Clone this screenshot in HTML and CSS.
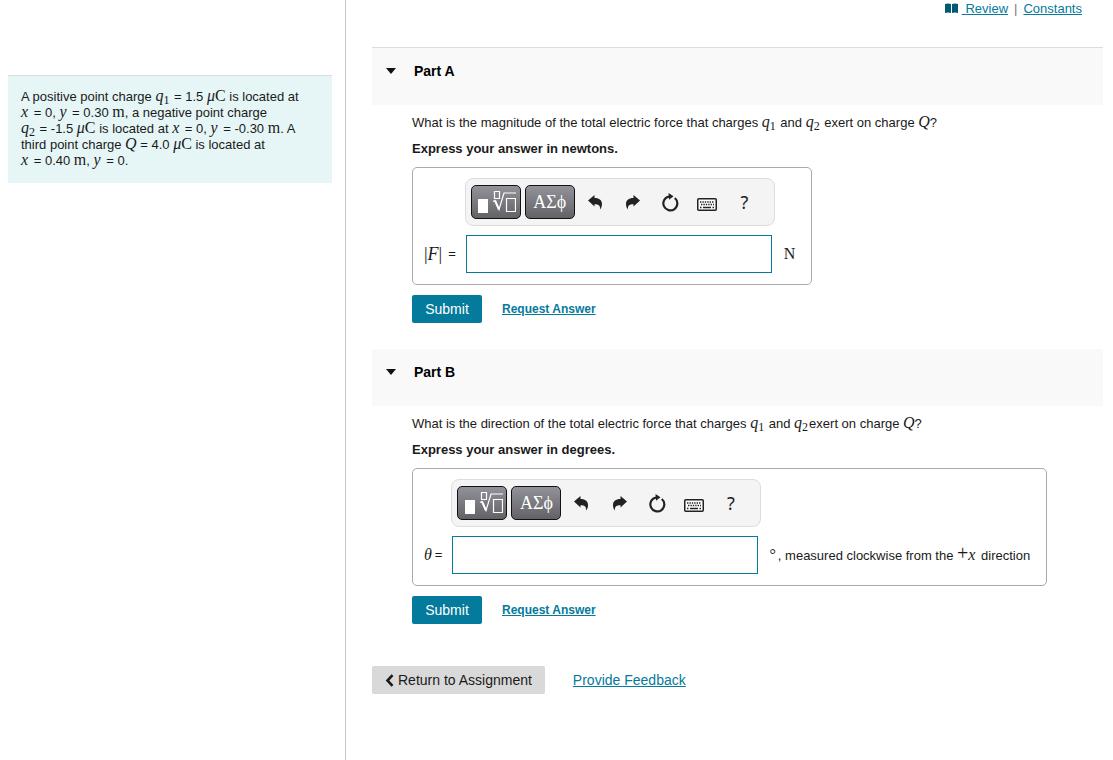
FILE: index.html
```html
<!DOCTYPE html>
<html lang="en">
<head>
<meta charset="utf-8">
<title>Electric force problem</title>
<link rel="stylesheet" href="styles.css">
</head>
<body>
<svg class="symbols" aria-hidden="true">
  <symbol id="i-template" viewBox="0 0 38 24">
    <path d="M0 9h10v14H0z" fill="#fff"/>
    <path d="M16.500 1.500h5v7h-5zM28.500 8.500h9v13h-9zM15 11.500l2-1 4 9 5-16.500h12" fill="none" stroke="#fff" stroke-width="1.200"/>
    <path d="M17 10.500l4 9" stroke="#fff" stroke-width="2"/>
  </symbol>
  <symbol id="i-undo" viewBox="0 0 14 15">
    <path d="M0 5.500L6.500 0v3C11.500 3 14 5.500 14 9c0 2.200-.6 4-2 5.500.4-3.800-1-5.300-5.500-5.300V11.500z"/>
  </symbol>
  <symbol id="i-reset" viewBox="0 0 18 19">
    <path d="M13.800 5A7 7 0 1 1 8.200 3.500" fill="none" stroke="currentColor" stroke-width="2.200"/>
    <path d="M7.500 0l5 3.300-4.500 3.500z"/>
  </symbol>
  <symbol id="i-keyboard" viewBox="0 0 20 13">
    <rect x=".75" y=".75" width="18.500" height="11.500" rx="1" fill="#fff" stroke="currentColor" stroke-width="1.500"/>
    <path d="M3 4h14M4 6.500h13" fill="none" stroke="currentColor" stroke-width="1.600" stroke-dasharray="1.400 1"/>
    <path d="M3 9.500h1.500M6 9.500h8M15.500 9.500H17" stroke="currentColor" stroke-width="1.500"/>
  </symbol>
</svg>
<div class="page">
  <aside class="sidebar">
    <p class="problem">A positive point charge <i class="m">q</i><span class="sub">1</span> = 1.5 <span class="m"><i>μ</i>C</span> is located at<br>
    <i class="m var">x</i> = 0, <i class="m var">y</i> = 0.30 <span class="m">m</span>, a negative point charge<br>
    <i class="m">q</i><span class="sub">2</span> = -1.5 <span class="m"><i>μ</i>C</span> is located at <i class="m var">x</i> = 0, <i class="m var">y</i> = -0.30 <span class="m">m</span>. A<br>
    third point charge <i class="m">Q</i> = 4.0 <span class="m"><i>μ</i>C</span> is located at<br>
    <i class="m var">x</i> = 0.40 <span class="m">m</span>, <i class="m var">y</i> = 0.</p>
  </aside>
  <main class="main">
    <nav class="links">
      <svg class="book" viewBox="0 0 13 11" aria-hidden="true"><path d="M0 1q3-1 6 0v9q-3-1-6 0zM7 1q3-1 6 0v9q-3-1-6 0z"/></svg>
      <a href="#review">&nbsp;Review</a><span class="bar">|</span><a href="#constants">Constants</a>
    </nav>

    <section class="part">
      <h2 class="part-head first"><button class="toggle" type="button"><span class="caret"></span>Part A</button></h2>
      <div class="part-body">
        <p class="question">What is the magnitude of the total electric force that charges <i class="m">q</i><span class="sub">1</span> and <i class="m">q</i><span class="sub">2</span> exert on charge <i class="m">Q</i>?</p>
        <p class="hint">Express your answer in newtons.</p>
        <div class="answer">
          <div class="tools">
            <button class="tile" type="button" aria-label="Templates"><svg class="template"><use href="#i-template"/></svg></button>
            <button class="tile greek" type="button">ΑΣϕ</button>
            <button class="tool" type="button" aria-label="Undo"><svg class="arrow"><use href="#i-undo"/></svg></button>
            <button class="tool" type="button" aria-label="Redo"><svg class="arrow flip"><use href="#i-undo"/></svg></button>
            <button class="tool" type="button" aria-label="Reset"><svg class="reset"><use href="#i-reset"/></svg></button>
            <button class="tool" type="button" aria-label="Keyboard"><svg class="keyboard"><use href="#i-keyboard"/></svg></button>
            <button class="tool help" type="button">?</button>
          </div>
          <label class="label" for="force"><span class="m norm">|<i>F</i>|</span> <span>=</span></label>
          <input class="field" id="force" type="text">
          <span class="unit m">N</span>
        </div>
        <div class="actions"><button class="submit" type="button">Submit</button><a class="request" href="#request-a">Request Answer</a></div>
      </div>
    </section>

    <section class="part">
      <h2 class="part-head"><button class="toggle" type="button"><span class="caret"></span>Part B</button></h2>
      <div class="part-body">
        <p class="question">What is the direction of the total electric force that charges <i class="m">q</i><span class="sub">1</span> and <i class="m">q</i><span class="sub">2</span>exert on charge <i class="m">Q</i>?</p>
        <p class="hint">Express your answer in degrees.</p>
        <div class="answer">
          <div class="tools">
            <button class="tile" type="button" aria-label="Templates"><svg class="template"><use href="#i-template"/></svg></button>
            <button class="tile greek" type="button">ΑΣϕ</button>
            <button class="tool" type="button" aria-label="Undo"><svg class="arrow"><use href="#i-undo"/></svg></button>
            <button class="tool" type="button" aria-label="Redo"><svg class="arrow flip"><use href="#i-undo"/></svg></button>
            <button class="tool" type="button" aria-label="Reset"><svg class="reset"><use href="#i-reset"/></svg></button>
            <button class="tool" type="button" aria-label="Keyboard"><svg class="keyboard"><use href="#i-keyboard"/></svg></button>
            <button class="tool help" type="button">?</button>
          </div>
          <label class="label" for="angle"><i class="m">θ</i> <span>=</span></label>
          <input class="field" id="angle" type="text">
          <span class="unit-text"><span class="m degree">°</span>, measured clockwise from the <span class="m plus">+</span><i class="m var">x</i> direction</span>
        </div>
        <div class="actions"><button class="submit" type="button">Submit</button><a class="request" href="#request-b">Request Answer</a></div>
      </div>
    </section>

    <footer class="footer">
      <button class="return" type="button"><svg class="chevron" viewBox="0 0 9 13" aria-hidden="true"><path d="M7.500 1.200L2.500 6.500l5 5.300" fill="none" stroke="currentColor" stroke-width="2.600"/></svg>Return to Assignment</button>
      <a class="feedback" href="#feedback">Provide Feedback</a>
    </footer>
  </main>
</div>
</body>
</html>
```
FILE: styles.css
```css
* { box-sizing: border-box; }
body {
  margin: 0;
  background: #fff;
  color: #1a1a1a;
  font: 13px/16px "Liberation Sans", Arial, sans-serif;
}
p, h2 { margin: 0; }
button { font: inherit; color: inherit; cursor: pointer; }
a { color: #047a9c; }
svg { display: block; fill: currentColor; }
.symbols { position: absolute; width: 0; height: 0; }

.page { display: flex; min-height: 100vh; }
.sidebar {
  flex: none;
  width: 346px;
  padding: 75px 13px 0 8px;
  border-right: 1px solid #c8c8c8;
}
.problem {
  padding: 13px 12px 14px 13px;
  border-top: 1px solid #dcdcdc;
  background: #e6f6f6;
  white-space: nowrap;
}
.main { flex: 1; min-width: 0; padding: 0 10px 0 26px; }

.m { font-family: "Liberation Serif", "Times New Roman", serif; font-size: 16px; line-height: 14px; }
.var { margin-right: 2px; }
.sub { margin-right: 1px; font: 12px/12px "Liberation Serif", "Times New Roman", serif; position: relative; top: 3px; }

.links {
  display: flex;
  justify-content: flex-end;
  height: 47px;
  padding: 1px 21px 0 0;
}
.book { width: 13px; height: 11px; margin: 2px 4px 0 0; color: #005a70; }
.bar { margin: 0 6px; color: #777; }

.part-head {
  height: 57px;
  padding: 14px;
  background: #f9f9f9;
  font-size: 14px;
}
.first { height: 58px; border-top: 1px solid #ddd; }
.toggle {
  display: flex;
  align-items: center;
  gap: 18px;
  padding: 1px 0;
  border: 0;
  background: none;
  color: #000;
  font-weight: bold;
}
.caret { border: 5px solid transparent; border-top: 6px solid #111; border-bottom: 0; }

.part-body { padding: 9px 0 26px 40px; }
.question { line-height: 17px; }
.hint { margin: 10px 0; font-weight: bold; }

.answer {
  display: inline-grid;
  grid-template-columns: auto 310px auto;
  row-gap: 9px;
  align-items: center;
  padding: 10px 16px 11px 11px;
  border: 1px solid #aaa;
  border-radius: 5px;
  vertical-align: top;
}
.tools {
  grid-column: 2;
  display: flex;
  align-items: center;
  height: 48px;
  padding: 0 5px;
  border: 1px solid #ddd;
  border-radius: 8px;
  background: #f4f4f4;
}
.tile {
  display: grid;
  place-items: center;
  width: 50px;
  height: 34px;
  margin-right: 4px;
  padding: 0;
  border: 1px solid #111;
  border-radius: 5px;
  background: linear-gradient(#92929a, #626266);
  color: #fff;
}
.greek { margin-right: 0; font: 18px/20px "Liberation Serif", "Times New Roman", serif; }
.template { width: 38px; height: 24px; margin-left: 3px; }
.tool {
  display: grid;
  place-items: center;
  width: 37px;
  height: 34px;
  padding: 0;
  border: 0;
  background: none;
  color: #222;
}
.greek + .tool { width: 40px; }
.arrow { width: 14px; height: 15px; }
.flip { transform: scaleX(-1); }
.reset { width: 18px; height: 19px; }
.keyboard { width: 20px; height: 13px; margin-top: 4px; }
.help { font-family: "Noto Sans", sans-serif; font-size: 18px; }

.label {
  grid-column: 1;
  display: flex;
  align-items: center;
  gap: 3px;
  padding-right: 9px;
  white-space: nowrap;
}
.norm { margin-right: 3px; font-size: 18px; }
.field {
  width: 306px;
  height: 38px;
  margin-left: 1px;
  padding: 0 8px;
  border: 1px solid #047a9c;
  background: #fff;
  font: inherit;
}
.unit { padding-left: 9px; }
.unit-text { padding-left: 8px; white-space: nowrap; }
.degree { margin-right: 2px; }
.plus { font-size: 20px; }

.actions { display: flex; align-items: center; gap: 20px; margin-top: 10px; }
.submit {
  width: 70px;
  height: 28px;
  padding: 0;
  border: 0;
  border-radius: 2px;
  background: #047a9c;
  color: #fff;
  font-size: 14px;
}
.request { font-size: 12px; font-weight: bold; }

.footer { display: flex; align-items: center; gap: 28px; padding-top: 16px; font-size: 14px; }
.return {
  display: flex;
  align-items: center;
  gap: 4px;
  height: 28px;
  padding: 0 13px;
  border: 0;
  border-radius: 2px;
  background: #d9d9d9;
}
.chevron { width: 9px; height: 13px; }
```
